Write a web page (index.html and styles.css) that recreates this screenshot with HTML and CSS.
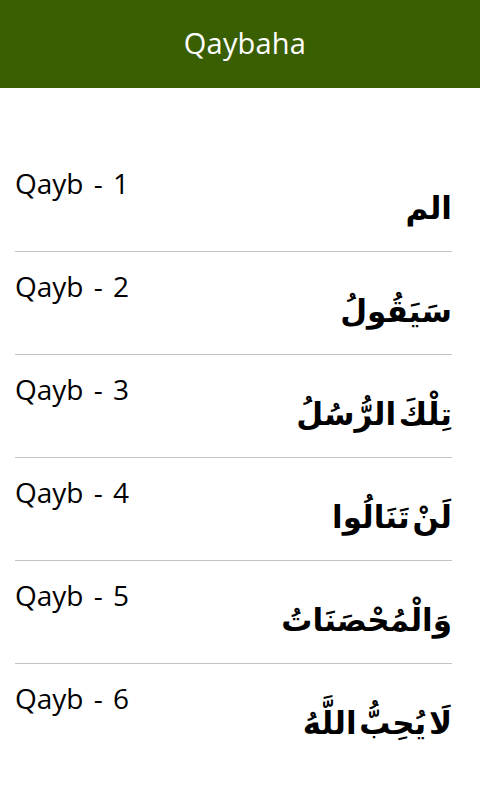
FILE: index.html
```html
<!DOCTYPE html>
<html lang="so">
<head>
<meta charset="utf-8">
<title>Qaybaha</title>
<link rel="stylesheet" href="styles.css">
</head>
<body>
<header class="topbar"><h1 class="title">Qaybaha</h1></header>
<ul class="list">
  <li class="row"><span class="label">Qayb - 1</span><span class="arabic" lang="ar" dir="rtl">الم</span></li>
  <li class="row"><span class="label">Qayb - 2</span><span class="arabic" lang="ar" dir="rtl">سَيَقُولُ</span></li>
  <li class="row"><span class="label">Qayb - 3</span><span class="arabic" lang="ar" dir="rtl">تِلْكَ الرُّسُلُ</span></li>
  <li class="row"><span class="label">Qayb - 4</span><span class="arabic" lang="ar" dir="rtl">لَنْ تَنَالُوا</span></li>
  <li class="row"><span class="label">Qayb - 5</span><span class="arabic" lang="ar" dir="rtl">وَالْمُحْصَنَاتُ</span></li>
  <li class="row"><span class="label">Qayb - 6</span><span class="arabic" lang="ar" dir="rtl">لَا يُحِبُّ اللَّهُ</span></li>
</ul>
</body>
</html>
```
FILE: styles.css
```css
html, body {
  margin: 0;
  padding: 0;
  background: #ffffff;
  font-family: "Open Sans", "Noto Sans", sans-serif;
  color: #000000;
}
.topbar {
  height: 88px;
  background: #3a5e02;
  display: flex;
  align-items: center;
  justify-content: center;
  padding-left: 10px;
}
.title {
  margin: 0;
  font-size: 29px;
  font-weight: 400;
  color: #ffffff;
  line-height: 1;
  padding-bottom: 4px;
  letter-spacing: 0.2px;
}
.list {
  list-style: none;
  margin: 0 28px 0 15px;
  padding: 61px 0 0 0;
}
.row {
  height: 102px;
  border-bottom: 1px solid #c4c4c4;
  display: flex;
  flex-direction: column;
}
.row:last-child {
  border-bottom: none;
}
.label {
  font-size: 28px;
  line-height: 36px;
  margin-top: 16px;
  word-spacing: 3px;
}
.arabic {
  font-family: "DejaVu Sans", sans-serif;
  font-weight: bold;
  font-size: 31px;
  line-height: 44px;
  text-align: right;
  margin-top: -15px;
  word-spacing: -8px;
}
```
